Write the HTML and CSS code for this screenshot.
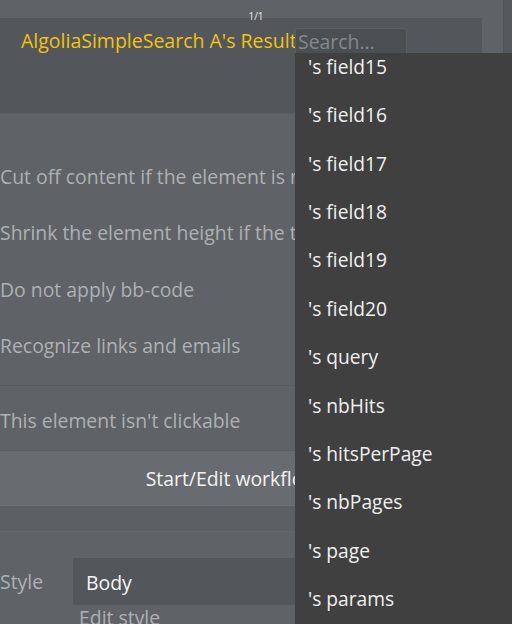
FILE: index.html
```html
<!DOCTYPE html>
<html>
<head>
<meta charset="utf-8">
<link rel="stylesheet" href="styles.css">
</head>
<body>
<div class="frame">
  <div class="main">
    <div class="pager">1/1</div>
    <div class="panel">
      <div class="title">AlgoliaSimpleSearch A's Result</div>
    </div>
    <div class="props">
      <div class="check">Cut off content if the element is not tall enough</div>
      <div class="check">Shrink the element height if the text is shorter</div>
      <div class="check">Do not apply bb-code</div>
      <div class="check">Recognize links and emails</div>
      <div class="section">
        <div class="check">This element isn't clickable</div>
      </div>
      <div class="button">Start/Edit workflow</div>
      <div class="band"></div>
      <div class="style-row">
        <div class="style-label">Style</div>
        <div class="style-col">
          <div class="select">Body</div>
          <div class="edit-style">Edit style</div>
        </div>
      </div>
    </div>
  </div>
  <div class="scrollbar"></div>
</div>
<div class="picker">
  <div class="search">Search...</div>
  <div class="menu">
    <div class="list">
      <div class="item">'s field15</div>
      <div class="item">'s field16</div>
      <div class="item">'s field17</div>
      <div class="item">'s field18</div>
      <div class="item">'s field19</div>
      <div class="item">'s field20</div>
      <div class="item">'s query</div>
      <div class="item">'s nbHits</div>
      <div class="item">'s hitsPerPage</div>
      <div class="item">'s nbPages</div>
      <div class="item">'s page</div>
      <div class="item">'s params</div>
    </div>
  </div>
</div>
</body>
</html>
```

FILE: styles.css
```css
* { box-sizing: border-box; }
html, body {
  margin: 0;
  width: 512px;
  height: 624px;
  overflow: hidden;
  background: #5f6367;
  font-family: "Open Sans", "DejaVu Sans", sans-serif;
}
.frame {
  display: flex;
  height: 624px;
}
.main {
  width: 503px;
  flex: none;
}
.scrollbar {
  flex: 1;
  background: #55595d;
  border-left: 1px solid #505458;
}
.pager {
  height: 18px;
  padding-top: 10px;
  font-size: 10px;
  line-height: 12px;
  color: #e8e8e8;
  text-align: center;
  width: 512px;
}
.panel {
  width: 482px;
  height: 96px;
  background: #53575b;
  border-bottom: 1px solid #5a5e62;
  padding: 10px 0 0 21px;
}
.title {
  font-size: 19.5px;
  line-height: 26px;
  color: #f2c311;
  white-space: nowrap;
}
.props {
  width: 482px;
}
.check {
  font-size: 19.4px;
  line-height: 26px;
  height: 56.5px;
  color: #adb1b4;
  white-space: nowrap;
  overflow: hidden;
}
.props > .check:first-child { margin-top: 49.5px; }
.section {
  border-top: 1px solid #585c60;
  margin-top: -4.5px;
  padding-top: 22px;
  height: 66px;
  border-bottom: 1px solid #5a5e62;
}
.section .check { height: auto; }
.button {
  width: 464px;
  height: 55px;
  background: #686c70;
  color: #f3f3f3;
  font-size: 19.4px;
  line-height: 55px;
  text-align: center;
  border-bottom: 1px solid #6e7276;
}
.band {
  height: 26px;
  background: #5c6064;
  border-bottom: 1px solid #62666a;
}
.style-row {
  display: flex;
  padding-top: 26px;
}
.style-label {
  width: 73px;
  font-size: 19.4px;
  line-height: 47px;
  color: #adb1b4;
}
.style-col {
  flex: 1;
}
.select {
  height: 47px;
  background: #53575b;
  color: #f5f5f5;
  font-size: 19.4px;
  line-height: 50px;
  padding-left: 13px;
}
.edit-style {
  font-size: 19.4px;
  line-height: 26px;
  padding-left: 6px;
  color: #adb1b4;
}
.picker {
  position: absolute;
  left: 295px;
  top: 28px;
  width: 217px;
}
.search {
  width: 112px;
  height: 25px;
  background: #4b4f52;
  border: 1px solid #5b5f63;
  border-bottom: none;
  border-radius: 3px 3px 0 0;
  color: #85898c;
  font-size: 19.4px;
  line-height: 26px;
  padding-left: 2px;
  white-space: nowrap;
  overflow: hidden;
}
.menu {
  height: 571px;
  background: #404040;
  overflow: hidden;
}
.list {
  margin-top: -10px;
}
.item {
  height: 48.36px;
  line-height: 48.36px;
  padding-left: 13px;
  font-size: 19.2px;
  color: #f0f0f0;
  white-space: nowrap;
}
```
